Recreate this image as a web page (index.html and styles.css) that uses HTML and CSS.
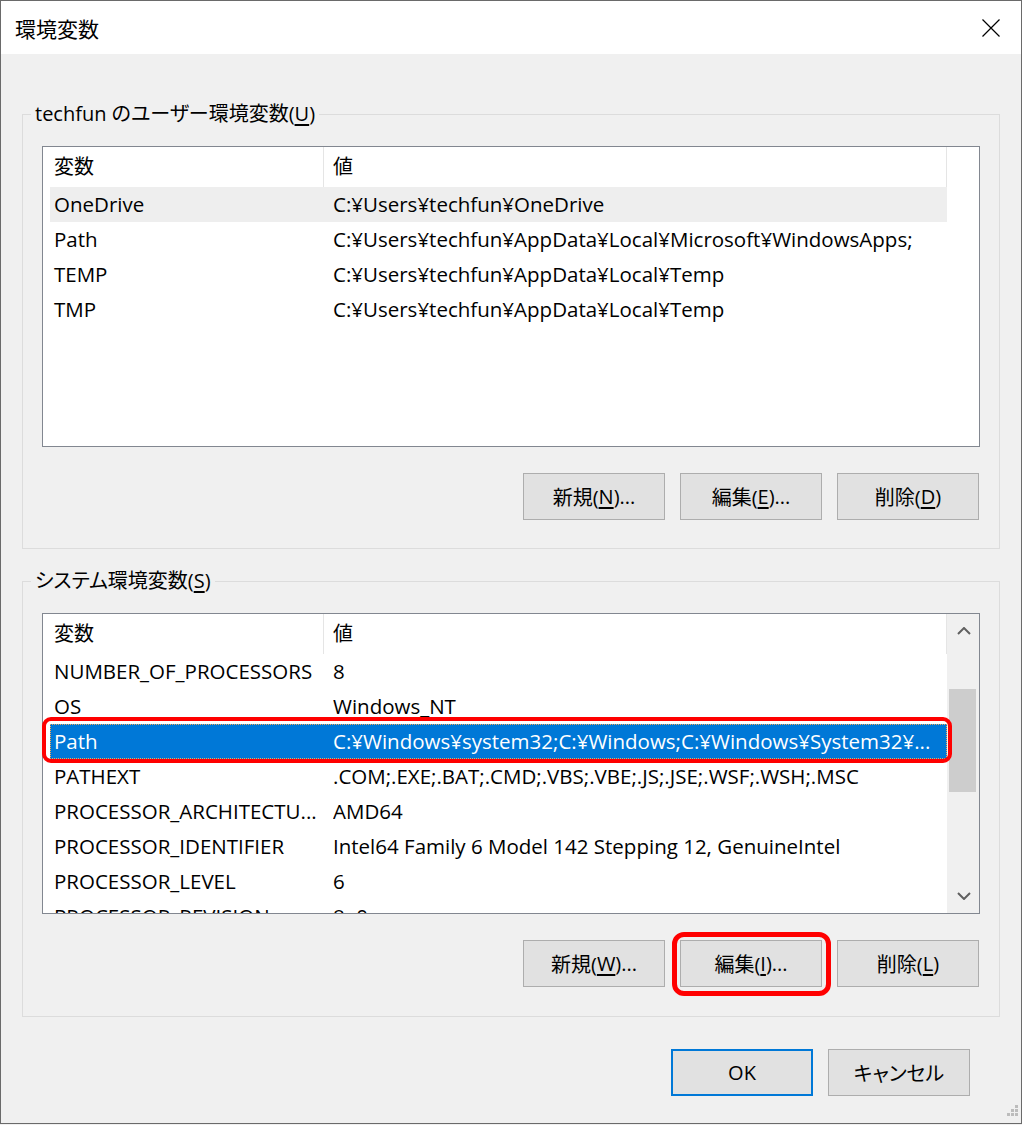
FILE: index.html
```html
<!DOCTYPE html>
<html lang="ja">
<head>
    <meta charset="UTF-8">
    <meta name="viewport" content="width=device-width, initial-scale=1.0">
    <title>環境変数</title>
    <link rel="stylesheet" href="styles.css">
</head>
<body>

<div class="window">
    <div class="titlebar">
        <span class="title">環境変数</span>
        <svg class="close" width="18" height="18" viewBox="0 0 18 18">
            <path d="M0.5 0.5 L17.5 17.5 M17.5 0.5 L0.5 17.5" stroke="#000" stroke-width="1.2" fill="none"/>
        </svg>
    </div>

    <div class="content">
        <fieldset class="group user-group">
            <legend>techfun のユーザー環境変数(<u>U</u>)</legend>
            <div class="listview">
                <div class="lv-main">
                    <div class="lv-head">
                        <div class="h-name">変数</div>
                        <div class="h-value">値</div>
                    </div>
                    <div class="lv-body">
                        <div class="lv-row hot"><div class="c-name">OneDrive</div><div class="c-value">C:¥Users¥techfun¥OneDrive</div></div>
                        <div class="lv-row"><div class="c-name">Path</div><div class="c-value">C:¥Users¥techfun¥AppData¥Local¥Microsoft¥WindowsApps;</div></div>
                        <div class="lv-row"><div class="c-name">TEMP</div><div class="c-value">C:¥Users¥techfun¥AppData¥Local¥Temp</div></div>
                        <div class="lv-row"><div class="c-name">TMP</div><div class="c-value">C:¥Users¥techfun¥AppData¥Local¥Temp</div></div>
                    </div>
                </div>
                <div class="lv-side"></div>
            </div>
            <div class="btn-row">
                <button class="btn">新規(<u>N</u>)...</button>
                <button class="btn">編集(<u>E</u>)...</button>
                <button class="btn">削除(<u>D</u>)</button>
            </div>
        </fieldset>

        <fieldset class="group system-group">
            <legend>システム環境変数(<u>S</u>)</legend>
            <div class="listview">
                <div class="lv-main">
                    <div class="lv-head">
                        <div class="h-name">変数</div>
                        <div class="h-value">値</div>
                    </div>
                    <div class="lv-body">
                        <div class="lv-row"><div class="c-name">NUMBER_OF_PROCESSORS</div><div class="c-value">8</div></div>
                        <div class="lv-row"><div class="c-name">OS</div><div class="c-value">Windows_NT</div></div>
                        <div class="lv-row selected"><div class="c-name">Path</div><div class="c-value">C:¥Windows¥system32;C:¥Windows;C:¥Windows¥System32¥...</div></div>
                        <div class="lv-row"><div class="c-name">PATHEXT</div><div class="c-value">.COM;.EXE;.BAT;.CMD;.VBS;.VBE;.JS;.JSE;.WSF;.WSH;.MSC</div></div>
                        <div class="lv-row"><div class="c-name">PROCESSOR_ARCHITECTU...</div><div class="c-value">AMD64</div></div>
                        <div class="lv-row"><div class="c-name">PROCESSOR_IDENTIFIER</div><div class="c-value">Intel64 Family 6 Model 142 Stepping 12, GenuineIntel</div></div>
                        <div class="lv-row"><div class="c-name">PROCESSOR_LEVEL</div><div class="c-value">6</div></div>
                        <div class="lv-row"><div class="c-name">PROCESSOR_REVISION</div><div class="c-value">8e0c</div></div>
                    </div>
                </div>
                <div class="scrollbar">
                    <div class="sb-btn">
                        <svg width="14" height="8" viewBox="0 0 14 8"><path d="M1 7 L7 1 L13 7" stroke="#606060" stroke-width="2" fill="none"/></svg>
                    </div>
                    <div class="sb-track"><div class="sb-thumb"></div></div>
                    <div class="sb-btn">
                        <svg width="14" height="8" viewBox="0 0 14 8"><path d="M1 1 L7 7 L13 1" stroke="#606060" stroke-width="2" fill="none"/></svg>
                    </div>
                </div>
                <div class="row-mark"></div>
            </div>
            <div class="btn-row">
                <button class="btn">新規(<u>W</u>)...</button>
                <button class="btn marked">編集(<u>I</u>)...</button>
                <button class="btn">削除(<u>L</u>)</button>
            </div>
        </fieldset>

        <div class="dialog-btns">
            <button class="btn default">OK</button>
            <button class="btn">キャンセル</button>
        </div>
    </div>

    <svg class="grip" width="14" height="14" viewBox="0 0 14 14">
        <rect x="11" y="0" width="3" height="3" fill="#bcbcbc"/>
        <rect x="7" y="4" width="3" height="3" fill="#bcbcbc"/>
        <rect x="11" y="4" width="3" height="3" fill="#bcbcbc"/>
        <rect x="3" y="8" width="3" height="3" fill="#bcbcbc"/>
        <rect x="7" y="8" width="3" height="3" fill="#bcbcbc"/>
        <rect x="11" y="8" width="3" height="3" fill="#bcbcbc"/>
    </svg>
</div>

</body>
</html>
```

FILE: styles.css
```css
* {
    box-sizing: border-box;
}

body {
    margin: 0;
    background: #f0f0f0;
    font-family: "Open Sans", "Noto Sans CJK JP", sans-serif;
    font-size: 20px;
    color: #000;
    font-feature-settings: "palt";
}

.window {
    position: relative;
    width: 1022px;
    height: 1124px;
    border: 1px solid #6a6a6a;
    background: #f0f0f0;
}

.titlebar {
    height: 53px;
    background: #fff;
    display: flex;
    align-items: center;
    justify-content: space-between;
    padding: 0 21px 0 14px;
}

.title {
    font-size: 21px;
}

.close {
    display: block;
}

.content {
    padding: 0 21px;
}

.group {
    margin: 46px 0 0;
    padding: 18px 19px 28px;
    border: 1px solid #dcdcdc;
    min-width: 0;
}

.system-group {
    margin-top: 18px;
    padding-bottom: 29px;
}

.group legend {
    font-size: 20px;
    line-height: 28px;
    padding: 0 4px;
    margin-left: -11px;
}

u {
    text-underline-offset: 3px;
}

.listview {
    position: relative;
    height: 301px;
    border: 1px solid #828790;
    background: #fff;
    display: flex;
}

.lv-main {
    width: 904px;
    display: flex;
    flex-direction: column;
}

.lv-head {
    display: flex;
    height: 40px;
    flex: none;
    line-height: 40px;
}

.h-name {
    width: 281px;
    padding-left: 11px;
    border-right: 1px solid #e5e5e5;
}

.h-value {
    width: 623px;
    padding-left: 9px;
    border-right: 1px solid #e5e5e5;
}

.lv-body {
    flex: 1;
    overflow: hidden;
    padding-left: 7px;
}

.lv-row {
    display: flex;
    width: 897px;
    height: 35px;
    line-height: 35px;
    white-space: nowrap;
    font-size: 20.5px;
}

.c-name {
    width: 283px;
    padding-left: 4px;
    overflow: hidden;
    flex: none;
}

.c-value {
    flex: 1;
    overflow: hidden;
}

.lv-row.hot {
    background: #eeeeee;
}

.lv-row.selected {
    background: #0078d7;
    color: #fff;
    outline: 1px dotted #f2a65a;
    outline-offset: -1px;
}

.lv-side {
    flex: 1;
}

.scrollbar {
    width: 32px;
    background: #f0f0f0;
    display: flex;
    flex-direction: column;
}

.sb-btn {
    height: 34px;
    display: flex;
    align-items: center;
    justify-content: center;
    padding-left: 1px;
}

.sb-btn svg {
    display: block;
}

.sb-track {
    flex: 1;
}

.sb-thumb {
    margin: 41px 0 0 2px;
    width: 27px;
    height: 103px;
    background: #cdcdcd;
}

.row-mark {
    position: absolute;
    left: -1px;
    top: 103px;
    width: 910px;
    height: 46px;
    border: 4px solid #ff0000;
    border-radius: 9px;
    z-index: 1;
}

.btn-row {
    display: flex;
    justify-content: flex-end;
    gap: 15px;
    margin-top: 26px;
    padding-right: 1px;
}

.btn {
    width: 142px;
    height: 47px;
    border: 1px solid #adadad;
    background: #e1e1e1;
    font: inherit;
    font-size: 20px;
    color: #000;
    padding: 0;
    display: flex;
    align-items: center;
    justify-content: center;
}

.btn.marked {
    position: relative;
}

.btn.marked::after {
    content: "";
    position: absolute;
    left: -9px;
    top: -9px;
    right: -10px;
    bottom: -10px;
    border: 5px solid #ff0000;
    border-radius: 12px;
}

.btn.default {
    border: 2px solid #0078d7;
}

.dialog-btns {
    display: flex;
    justify-content: flex-end;
    gap: 15px;
    margin-top: 32px;
    padding-right: 30px;
}

.grip {
    position: absolute;
    right: 3px;
    bottom: 4px;
}
```
